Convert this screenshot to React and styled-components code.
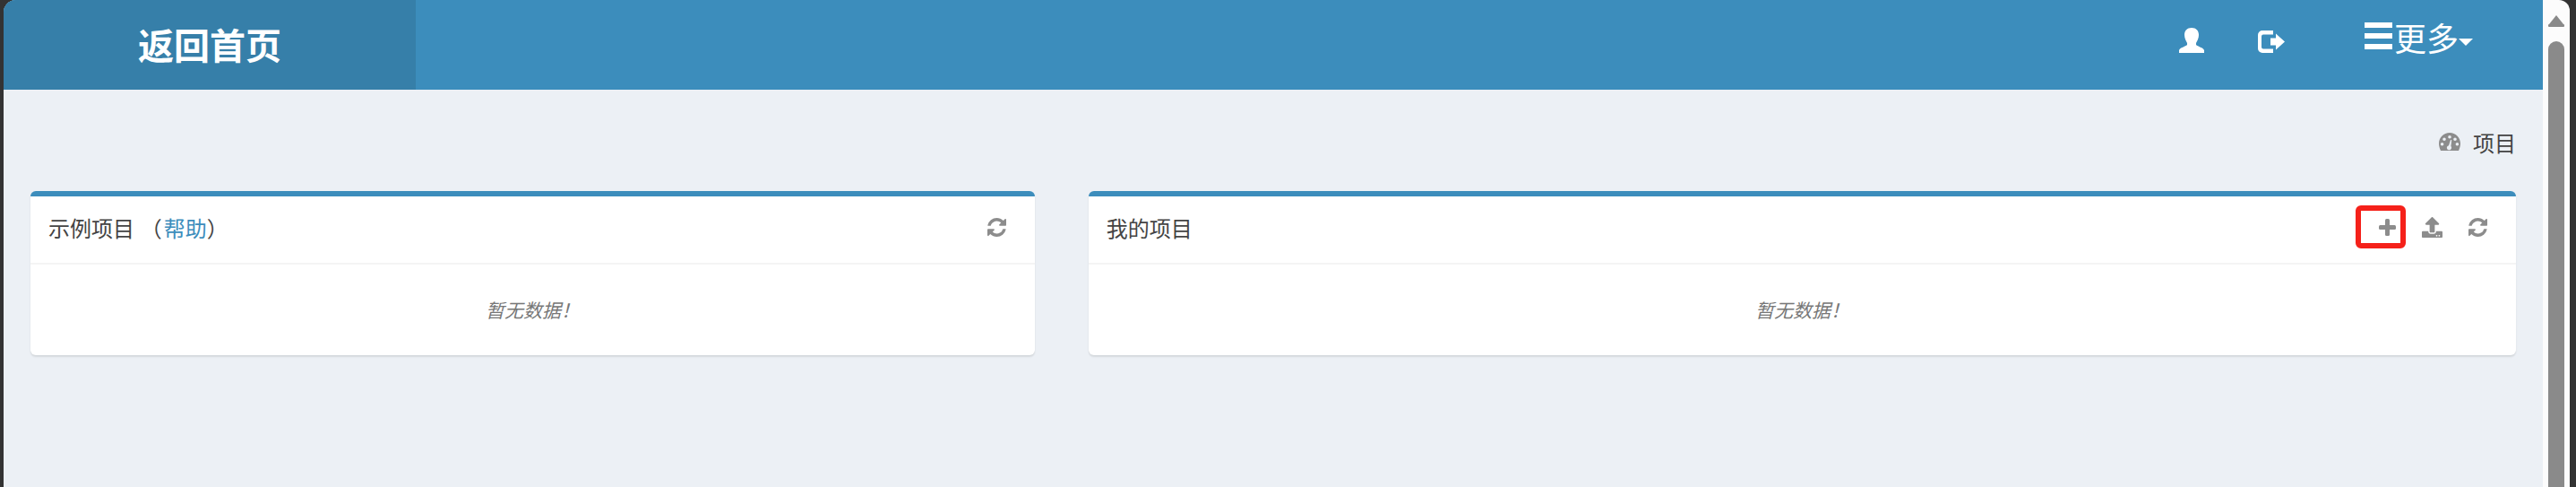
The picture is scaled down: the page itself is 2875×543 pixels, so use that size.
import React from "react"
import styled, { createGlobalStyle } from "styled-components"
import { FaUpload } from "react-icons/fa"

const GlobalStyle = createGlobalStyle`
  html, body {
    margin: 0;
    height: 100%;
    overflow: hidden;
    background: #333;
  }
  body {
    font-family: "Liberation Sans", "Noto Sans CJK SC", sans-serif;
    color: #444;
  }
`

const Frame = styled.div`
  display: flex;
  height: 543px;
  padding: 0 7px 0 4px;
  box-sizing: border-box;
  background: #333;
`

const Page = styled.div`
  flex: 1;
  min-width: 0;
  background: #ecf0f5;
  border-top-left-radius: 14px;
  overflow: hidden;
`

const Scrollbar = styled.div`
  width: 30px;
  padding: 16px 6px 0;
  box-sizing: border-box;
  background: #fcfcfc;
  border-top-right-radius: 12px;
  display: flex;
  flex-direction: column;
  gap: 16px;
`

const ScrollThumb = styled.div`
  flex: 1;
  background: #8a8a8a;
  border-radius: 9px 9px 0 0;
`

const Header = styled.header`
  display: flex;
  height: 100px;
  background: #3c8dbc;
  color: #fff;
`

const Logo = styled.a`
  width: 460px;
  display: flex;
  align-items: center;
  justify-content: center;
  background: #367fa9;
  font-size: 40px;
  font-weight: 700;
  padding-bottom: 2px;
  box-sizing: border-box;
`

const Nav = styled.nav`
  flex: 1;
  display: flex;
  justify-content: flex-end;
  align-items: center;
`

const NavIcon = styled.span`
  display: flex;
  margin-top: ${(p) => p.$top}px;
  margin-right: ${(p) => p.$gap}px;
`

const More = styled.span`
  display: flex;
  align-items: center;
  font-size: 36px;
  line-height: 40px;
  margin: -10px 78px 0 0;
`

const Bars = styled.svg`
  margin: -10px 2px 0 0;
`

const Caret = styled.i`
  width: 0;
  height: 0;
  margin: 4px 0 0 0;
  border-top: 8px solid #fff;
  border-left: 8px solid transparent;
  border-right: 8px solid transparent;
`

const Crumbs = styled.div`
  display: flex;
  justify-content: flex-end;
  align-items: center;
  height: 110px;
  padding: 3px 30px 0 0;
  gap: 14px;
  font-size: 24px;
  color: #444;
`

const Columns = styled.div`
  display: grid;
  grid-template-columns: 5fr 7fr;
`

const Col = styled.div`
  padding: 0 30px;
  min-width: 0;
`

const Card = styled.section`
  background: #fff;
  border-top: 6px solid #3c8dbc;
  border-radius: 6px;
  box-shadow: 0 2px 2px rgba(0, 0, 0, 0.1);
`

const CardHead = styled.div`
  display: flex;
  align-items: center;
  justify-content: space-between;
  height: 68px;
  padding: 0 32px 6px 20px;
  border-bottom: 2px solid #f4f4f4;
  font-size: 24px;
`

const HelpLink = styled.a`
  color: #3c8dbc;
  margin-left: 2px;
`

const Tools = styled.div`
  display: flex;
  align-items: center;
  color: #8c8c8c;
  font-size: 23px;
`

const Tool = styled.button`
  display: flex;
  align-items: center;
  justify-content: flex-end;
  width: ${(p) => p.$w}px;
  height: 48px;
  margin: 0;
  box-sizing: border-box;
  border: ${(p) => (p.$marked ? "6px solid #f5211a" : "0")};
  padding: 0 ${(p) => (p.$marked ? "5px" : "0")} 0 0;
  border-radius: 6px;
  background: none;
  color: inherit;
  font-size: inherit;
`

const CardBody = styled.div`
  height: 99px;
  padding-bottom: 2px;
  display: flex;
  align-items: center;
  justify-content: center;
  font-size: 21px;
  font-style: italic;
  color: #777;
`

const UserIcon = () => (
  <svg width="28" height="28" viewBox="0 0 28 28" fill="#fff">
    <path d="M14 0c5 0 8 3 8 8 0 4-2 7-3 9v2c2 2 8 3 9 6v3H0v-3c1-3 7-4 9-6v-2c-1-2-3-5-3-9 0-5 3-8 8-8z" />
  </svg>
)

const LogoutIcon = () => (
  <svg width="30" height="25" viewBox="0 0 30 25" fill="#fff">
    <path d="M5 0h12v4.500H6a2 2 0 0 0-2 2v12a2 2 0 0 0 2 2h11V25H5a5 5 0 0 1-5-5V5a5 5 0 0 1 5-5z" />
    <path d="M14 8.500h6v-5l10 9-10 9v-5h-6z" />
  </svg>
)

const BarsIcon = () => (
  <Bars width="31" height="30" viewBox="0 0 31 30" fill="#fff">
    <rect width="31" height="6" />
    <rect y="12" width="31" height="6" />
    <rect y="24" width="31" height="6" />
  </Bars>
)

const GaugeIcon = () => (
  <svg width="24" height="20" viewBox="0 0 24 20" fill="#8c8c8c">
    <path
      fillRule="evenodd"
      d="M12 0c6.600 0 12 5.200 12 11.800 0 2.900-.8 5.800-2 8.200H2C.8 17.600 0 14.700 0 11.800 0 5.200 5.400 0 12 0zM12 3a1.800 1.800 0 1 0 0 3.600A1.800 1.800 0 0 0 12 3zM6 5.400A1.800 1.800 0 1 0 6 9a1.800 1.800 0 0 0 0-3.600zM18 5.400A1.800 1.800 0 1 0 18 9a1.800 1.800 0 0 0 0-3.600zM3.600 11a1.800 1.800 0 1 0 0 3.600 1.800 1.800 0 0 0 0-3.600zM20.400 11a1.800 1.800 0 1 0 0 3.600 1.800 1.800 0 0 0 0-3.600zM13 8l-2 6.200a2.600 2.600 0 1 0 2.400.8L14.200 8.200z"
    />
  </svg>
)

const RefreshIcon = () => (
  <svg width="21" height="21" viewBox="128 128 1536 1536" fill="currentColor">
    <path d="M1639 1056q0 5-1 7-64 268-268 434.500t-478 166.500q-146 0-282.500-55t-243.500-157l-129 129q-19 19-45 19t-45-19-19-45v-448q0-26 19-45t45-19h448q26 0 45 19t19 45-19 45l-137 137q71 66 161 102t187 36q134 0 250-65t186-179q11-17 53-117 8-23 30-23h192q13 0 22.500 9.500t9.500 22.500zm25-800v448q0 26-19 45t-45 19h-448q-26 0-45-19t-19-45 19-45l138-138q-148-137-349-137-134 0-250 65t-186 179q-11 17-53 117-8 23-30 23h-199q-13 0-22.500-9.500t-9.500-22.500v-7q65-268 270-434.500t480-166.500q146 0 284 55.500t245 156.500l130-129q19-19 45-19t45 19 19 45z" />
  </svg>
)

const PlusIcon = () => (
  <svg width="19" height="19" viewBox="0 0 19 19" fill="currentColor">
    <rect x="7" width="5" height="19" rx="1.500" />
    <rect y="7" width="19" height="5" rx="1.500" />
  </svg>
)

const ArrowUp = () => (
  <svg width="18" height="14" viewBox="0 0 18 14" fill="#8a8a8a">
    <path d="M9 1L1 11a1.500 1.500 0 0 0 1 3h14a1.500 1.500 0 0 0 1-3z" />
  </svg>
)

export default function App() {
  return (
    <Frame>
      <GlobalStyle />
      <Page>
        <Header>
          <Logo>返回首页</Logo>
          <Nav>
            <NavIcon $top={-10} $gap={60}>
              <UserIcon />
            </NavIcon>
            <NavIcon $top={-7} $gap={89}>
              <LogoutIcon />
            </NavIcon>
            <More>
              <BarsIcon />
              更多
              <Caret />
            </More>
          </Nav>
        </Header>
        <Crumbs>
          <GaugeIcon />
          <span>项目</span>
        </Crumbs>
        <Columns>
          <Col>
            <Card>
              <CardHead>
                <span>
                  示例项目 （<HelpLink>帮助</HelpLink>）
                </span>
                <Tools>
                  <RefreshIcon />
                </Tools>
              </CardHead>
              <CardBody>暂无数据！</CardBody>
            </Card>
          </Col>
          <Col>
            <Card>
              <CardHead>
                <span>我的项目</span>
                <Tools>
                  <Tool $w={56} $marked>
                    <PlusIcon />
                  </Tool>
                  <Tool $w={41}>
                    <FaUpload />
                  </Tool>
                  <Tool $w={50}>
                    <RefreshIcon />
                  </Tool>
                </Tools>
              </CardHead>
              <CardBody>暂无数据！</CardBody>
            </Card>
          </Col>
        </Columns>
      </Page>
      <Scrollbar>
        <ArrowUp />
        <ScrollThumb />
      </Scrollbar>
    </Frame>
  )
}
